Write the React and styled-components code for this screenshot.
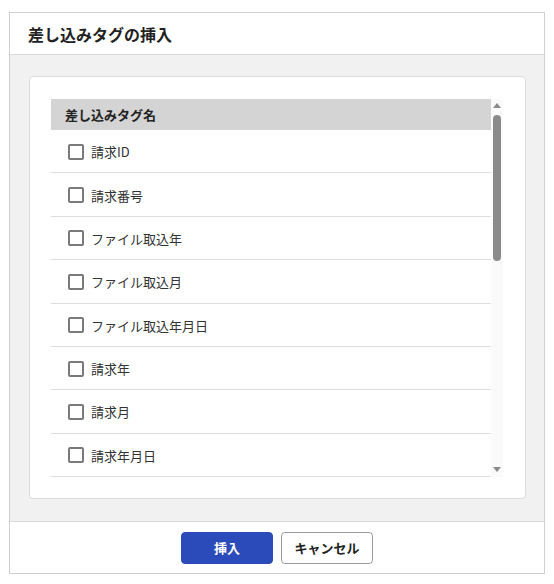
import styled, { createGlobalStyle } from 'styled-components';

const GlobalStyle = createGlobalStyle`
  html, body {
    margin: 0;
    background: #fff;
  }
  body {
    padding: 12px 9px;
    font-family: "Noto Sans CJK JP", "Noto Sans", sans-serif;
    color: #333;
  }
`;

const Dialog = styled.div`
  width: 536px;
  height: 562px;
  box-sizing: border-box;
  border: 1px solid #cfcfcf;
  display: flex;
  flex-direction: column;
  background: #fff;
`;

const Header = styled.div`
  height: 42px;
  box-sizing: border-box;
  border-bottom: 1px solid #d9d9d9;
  display: flex;
  align-items: center;
  padding: 0 18px;
  font-size: 16px;
  font-weight: 700;
  color: #222;
`;

const Body = styled.div`
  flex: 1;
  background: #f1f1f1;
  padding: 21px 18px 22px 19px;
  display: flex;
  flex-direction: column;
`;

const Card = styled.div`
  flex: 1;
  background: #fff;
  border: 1px solid #dcdcdc;
  border-radius: 4px;
  padding: 22px 22px 21px 21px;
  display: flex;
`;

const ListWrap = styled.div`
  flex: 1;
  display: flex;
  height: 378px;
`;

const List = styled.div`
  flex: 1;
  overflow: hidden;
`;

const HeadRow = styled.div`
  height: 31px;
  background: #d4d4d4;
  display: flex;
  align-items: center;
  padding-left: 14px;
  font-size: 13px;
  font-weight: 700;
  color: #222;
`;

const Row = styled.label`
  height: 43.375px;
  box-sizing: border-box;
  border-bottom: 1px solid #dedede;
  display: flex;
  align-items: center;
  gap: 7px;
  padding-left: 17px;
  padding-top: 1px;
  font-size: 13px;
  color: #333;
`;

const Box = styled.span`
  width: 16px;
  height: 16px;
  box-sizing: border-box;
  border: 2px solid #7a7a7a;
  border-radius: 2px;
  background: #fff;
`;

const Scrollbar = styled.div`
  width: 12px;
  background: #fafafa;
  display: flex;
  flex-direction: column;
  align-items: center;
`;

const Arrow = styled.div`
  width: 0;
  height: 0;
  border-left: 4.5px solid transparent;
  border-right: 4.5px solid transparent;
  ${(p) =>
    p.$down
      ? 'border-top: 5px solid #8a8a8a; margin-bottom: 5px;'
      : 'border-bottom: 5px solid #8a8a8a; margin-top: 4px;'}
`;

const Track = styled.div`
  flex: 1;
  width: 100%;
  display: flex;
  justify-content: center;
  padding-top: 7px;
`;

const Thumb = styled.div`
  width: 8px;
  height: 146px;
  border-radius: 4px;
  background: #8a8a8a;
`;

const Footer = styled.div`
  height: 51px;
  border-top: 1px solid #d9d9d9;
  display: flex;
  justify-content: center;
  align-items: center;
  gap: 8px;
`;

const Button = styled.button`
  width: 92px;
  height: 32px;
  border-radius: 4px;
  font-family: inherit;
  font-size: 13px;
  font-weight: 700;
  cursor: pointer;
  border: 1px solid ${(p) => (p.$primary ? '#2a4bb9' : '#9a9a9a')};
  background: ${(p) => (p.$primary ? '#2a4bb9' : '#fff')};
  color: ${(p) => (p.$primary ? '#fff' : '#222')};
`;

const tags = [
  '請求ID',
  '請求番号',
  'ファイル取込年',
  'ファイル取込月',
  'ファイル取込年月日',
  '請求年',
  '請求月',
  '請求年月日',
];

export default function App() {
  return (
    <>
      <GlobalStyle />
      <Dialog>
        <Header>差し込みタグの挿入</Header>
        <Body>
          <Card>
            <ListWrap>
              <List>
                <HeadRow>差し込みタグ名</HeadRow>
                {tags.map((t) => (
                  <Row key={t}>
                    <Box />
                    {t}
                  </Row>
                ))}
              </List>
              <Scrollbar>
                <Arrow />
                <Track>
                  <Thumb />
                </Track>
                <Arrow $down />
              </Scrollbar>
            </ListWrap>
          </Card>
        </Body>
        <Footer>
          <Button $primary>挿入</Button>
          <Button>キャンセル</Button>
        </Footer>
      </Dialog>
    </>
  );
}
